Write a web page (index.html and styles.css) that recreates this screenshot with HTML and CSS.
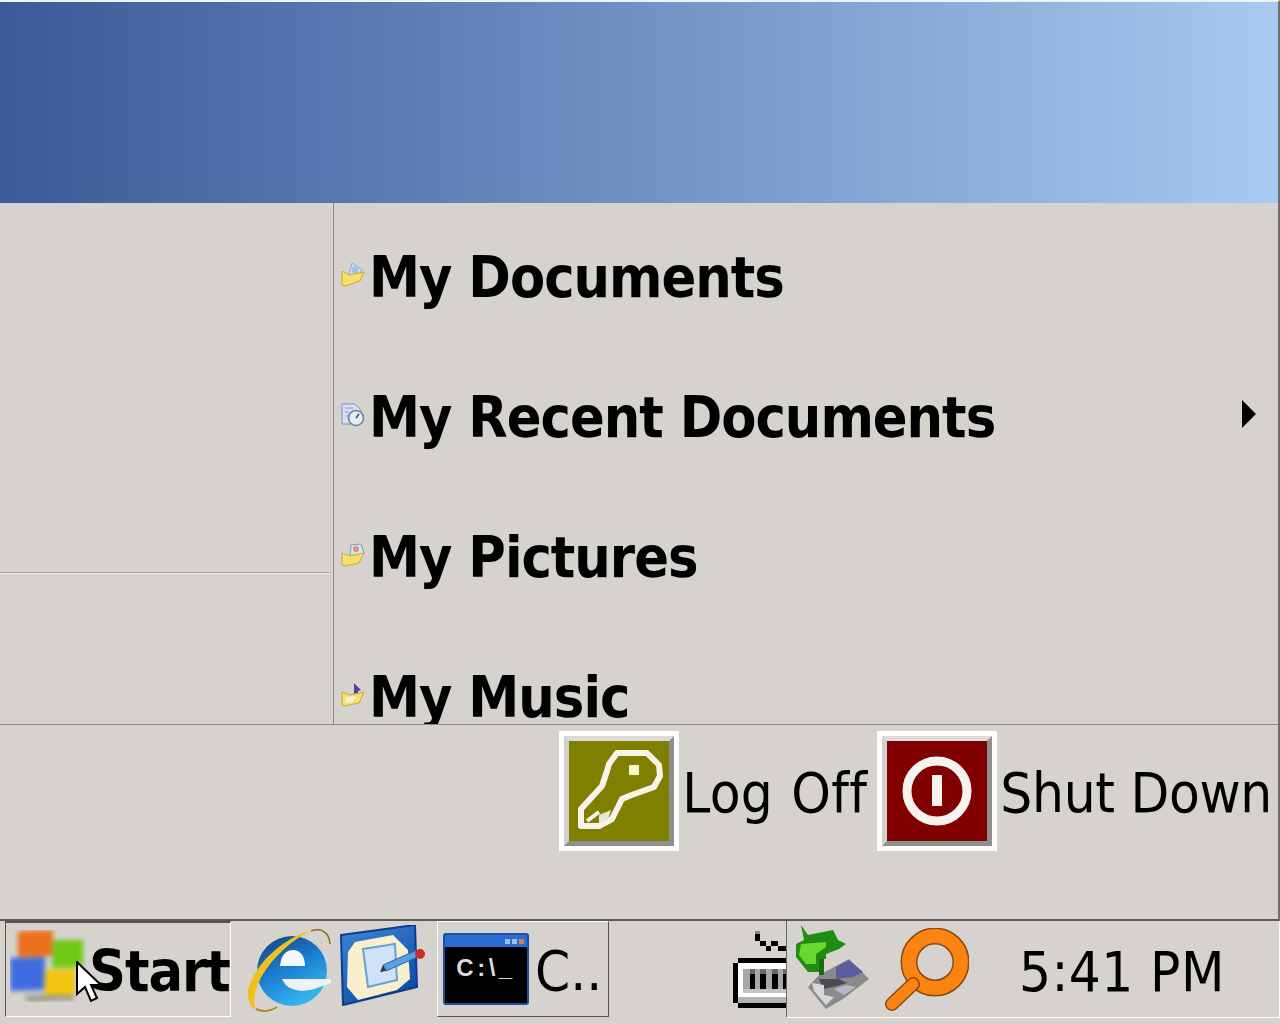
FILE: index.html
```html
<!DOCTYPE html>
<html lang="en">
<head>
<meta charset="utf-8">
<title>Start Menu</title>
<link rel="stylesheet" href="styles.css">
</head>
<body>
<div class="desktop">
  <section class="menu">
    <div class="banner"></div>
    <div class="middle">
      <aside class="pinned"><div class="pinned-rule"></div></aside>
      <nav class="places">
        <a class="place">
          <svg class="place-icon" viewBox="0 0 24 26"><path d="M11 1l10 7-5 9-8-5z" fill="#cfe3f0" stroke="#8fa6c0"/><circle cx="14" cy="8" r="3.4" fill="#9cc4e4"/><path d="M1 9l7 4 15-3-4 9-15 5-3-1z" fill="#f7df6e" stroke="#c9a827"/></svg>
          <span class="place-label">My Documents</span>
        </a>
        <a class="place">
          <svg class="place-icon" viewBox="0 0 24 26"><path d="M1 2h13l6 6v14H1z" fill="#d7e0f2" stroke="#7f8fc0"/><path d="M4 6h8M4 10h4M4 14h3" stroke="#8b9bcb"/><circle cx="15" cy="16" r="7.5" fill="#e4ebf6" stroke="#6f7f9f" stroke-width="1.6"/><path d="M15 16l3-4" stroke="#404a66" stroke-width="1.5"/></svg>
          <span class="place-label">My Recent Documents</span>
          <svg class="place-arrow" viewBox="0 0 14 28"><path d="M0 0l14 14L0 28z" fill="#000"/></svg>
        </a>
        <a class="place">
          <svg class="place-icon" viewBox="0 0 24 26"><path d="M10 3l10-1 3 9-9 6-5-5z" fill="#cfe6ea" stroke="#7d9cb5"/><circle cx="15" cy="7" r="3" fill="#e38f80"/><path d="M1 11l7 3 15-3-5 10-14 3-3-1z" fill="#f7df6e" stroke="#c9a827"/></svg>
          <span class="place-label">My Pictures</span>
        </a>
        <a class="place">
          <svg class="place-icon" viewBox="0 0 24 26"><path d="M13 1l7 7-3 1v5h-4z" fill="#4a47a3"/><path d="M1 10l8 3 14-3-5 11-14 3-3-1z" fill="#f7df6e" stroke="#c9a827"/><path d="M5 15l10-1-3 6-8 1z" fill="#f5eedc"/></svg>
          <span class="place-label">My Music</span>
        </a>
      </nav>
    </div>
    <div class="session">
      <button class="session-action">
        <span class="session-tile tile-olive">
          <svg class="tile-glyph" viewBox="0 0 100 100">
            <path d="M40 23l8-11h30l12 12 1 11-6 11-25 9-7 3-10 20-13 7H12V68l21-23 5-15z" fill="none" stroke="#f6f4ea" stroke-width="6" stroke-linejoin="round"/>
            <rect x="60" y="24" width="10" height="10" fill="#fbf8c8"/>
            <path d="M18 80l12-9" stroke="#f6f4ea" stroke-width="4"/>
            <path d="M30 74l12-5-3 10-9 3z" fill="#e8e6d4"/>
          </svg>
        </span>
        <span class="session-label session-label-wide">Log Off</span>
      </button>
      <button class="session-action">
        <span class="session-tile tile-maroon">
          <svg class="tile-glyph" viewBox="0 0 100 100"><circle cx="50" cy="50" r="30" fill="none" stroke="#f6f2ee" stroke-width="9"/><rect x="45" y="34" width="10" height="31" fill="#f6f2ee"/></svg>
        </span>
        <span class="session-label session-label-tight">Shut Down</span>
      </button>
    </div>
  </section>
  <footer class="taskbar">
    <button class="start">
      <svg class="start-flag" viewBox="0 0 76 72">
        <g class="soft">
          <path d="M14 66l50-4 0 8-46 2z" fill="#9b9a90"/>
          <path d="M8 1l35-1-1 26-34 1z" fill="#ea701c"/>
          <path d="M43 10l30 0 0 27-31 1z" fill="#70c814"/>
          <path d="M0 28l35-1-1 33-34 1z" fill="#3f6be0"/>
          <path d="M35 40l30-1 0 26-30 0z" fill="#f2c50c"/>
        </g>
      </svg>
      <span class="start-label">Start</span>
    </button>
    <div class="quick">
      <svg class="quick-ie" viewBox="0 0 84 84">
        <defs>
          <linearGradient id="ieBlue" x1="0" y1="0" x2=".5" y2="1">
            <stop offset="0" stop-color="#123f7c"/>
            <stop offset=".55" stop-color="#1b7fd0"/>
            <stop offset="1" stop-color="#36b2f0"/>
          </linearGradient>
        </defs>
        <circle cx="45" cy="43" r="35" fill="url(#ieBlue)"/>
        <path d="M33 38C34 27 39 22 46 22s12 6 12 16z" fill="#f4f8fc"/>
        <path d="M35 51h49v4l-14 5c-12 5-26 3-32-4z" fill="#eef2f4"/>
        <path d="M64 3C40 8 8 34 1 62c-1 10 2 18 8 19-4-9-1-21 7-35C26 30 44 12 64 3z" fill="#efc11f"/>
        <path d="M64 3c8-3 18-1 19 13" fill="none" stroke="#8a7020" stroke-width="1.5"/>
        <path d="M9 81c7 3 15 2 21-2" fill="none" stroke="#b08a1c" stroke-width="2"/>
      </svg>
      <svg class="quick-note" viewBox="0 0 86 84">
        <defs>
          <linearGradient id="noteBlue" x1="0" y1="0" x2=".6" y2="1">
            <stop offset="0" stop-color="#3f86d8"/>
            <stop offset="1" stop-color="#0f4ca6"/>
          </linearGradient>
        </defs>
        <path d="M1 10L75 0l2 62-74 18z" fill="url(#noteBlue)" stroke="#0d3c8d" stroke-width="2" stroke-linejoin="round"/>
        <path d="M15 17l38-7 15 15 2 29-13 11-39 10-11-13 1-35z" fill="#f8f0cc"/>
        <path d="M23 24l32-5 2 36-29 7z" fill="#cfe2f6" stroke="#6aa0d8" stroke-width="2"/>
        <path d="M43 40l34-15 3 6-34 15z" fill="#5aa0e0" stroke="#2a63b5"/>
        <path d="M43 40l3 6-6 1z" fill="#3a3a3a"/>
        <circle cx="80" cy="29" r="5" fill="#c42f28"/>
      </svg>
    </div>
    <button class="task">
      <span class="console">
        <span class="console-title"><i class="console-dot"></i><i class="console-dot"></i><i class="console-dot console-dot-red"></i></span>
        <span class="console-screen">C:\_</span>
      </span>
      <span class="task-label">C..</span>
    </button>
    <div class="keyboard-slot">
      <svg class="keyboard" viewBox="0 0 53 78" shape-rendering="crispEdges">
        <path d="M22 0h5v3h-5z" fill="#8a8a8a"/>
        <path d="M22 3h5v7h6v5h5v-5h7v5h8v5h-8v-5h-7v5h-5v-5h-6v-5h-5z" fill="#000"/>
        <path d="M5 27h48v5H5zM0 32h5v40H0zM5 72h48v5H5z" fill="#000"/>
        <path d="M5 32h48v40H5z" fill="#fff"/>
        <path d="M10 38h43v20H10z" fill="#a8a8a8"/>
        <path d="M17 38h5v20h-5zM27 38h6v20h-6zM39 38h6v20h-6zM50 38h3v20h-3z" fill="#6a6a6a"/>
        <path d="M17 43h5v15h-5zM27 43h6v15h-6zM39 43h6v15h-6zM50 43h3v15h-3z" fill="#000"/>
        <path d="M10 58h43v4H10z" fill="#c4c4c4"/>
        <path d="M5 66h48v6H5z" fill="#b4b4b4"/>
      </svg>
    </div>
    <div class="tray">
      <svg class="tray-net" viewBox="0 0 74 84">
        <path d="M30 84L12 62l11-12 30-16 20 20-26 20z" fill="#8a8a8a"/>
        <path d="M40 42l13-7 14 12-10 5-17 2z" fill="#5a5c9c"/>
        <path d="M23 54h20l8 4-14 4-10 2z" fill="#4a4a50"/>
        <path d="M16 58l12 2 0 10 10 2-8 8-12-14z" fill="#d8d8dc"/>
        <path d="M38 64l12-4 10 2-12 8z" fill="#b8b8c4"/>
        <path d="M5 0l7 10 25-5 5 10 8 4-7 5-13 5v5h-2l-1 13H12L0 32V19l8-4z" fill="#1f8e10"/>
        <path d="M5 19l25-2v5L20 29v10H10l-7-9z" fill="#66d830"/>
        <path d="M23 34h5v16h-5z" fill="#1a6a10"/>
      </svg>
      <svg class="tray-search" viewBox="0 0 84 84">
        <ellipse cx="50" cy="34" rx="26" ry="26" fill="none" stroke="#8a4a10" stroke-width="17"/>
        <ellipse cx="50" cy="34" rx="26" ry="26" fill="none" stroke="#fb8312" stroke-width="14"/>
        <path d="M28 56L7 76" stroke="#8a4a10" stroke-width="14" stroke-linecap="round"/>
        <path d="M28 56L7 76" stroke="#fb8312" stroke-width="11" stroke-linecap="round"/>
      </svg>
      <span class="clock">5:41 PM</span>
    </div>
    <svg class="pointer" viewBox="0 0 24 42"><path d="M1 1v32l8-7 6 14 6-3-6-13h10z" fill="#fff" stroke="#000" stroke-width="2"/></svg>
  </footer>
</div>
</body>
</html>
```

FILE: styles.css
```css
* { box-sizing: border-box; }
html, body { margin: 0; height: 100%; overflow: hidden; }
body {
  background: #d6d3ce;
  font-family: "DejaVu Sans", sans-serif;
  font-stretch: condensed;
  color: #000;
}
button {
  font: inherit;
  color: inherit;
  background: none;
  border: 0;
  padding: 0;
  margin: 0;
}
.desktop {
  width: 1280px;
  height: 1024px;
  display: flex;
  flex-direction: column;
  position: relative;
}
.menu {
  height: 921px;
  display: flex;
  flex-direction: column;
  border-top: 2px solid #f2f1ee;
  border-right: 2px solid #6e6e6a;
  border-bottom: 2px solid #5a5a58;
}
.banner {
  height: 201px;
  flex: none;
  background: linear-gradient(90deg, #3a5a98, #a6caf0);
}
.middle {
  height: 522px;
  flex: none;
  display: flex;
  border-bottom: 1px solid #8a8a86;
}
.pinned {
  width: 334px;
  flex: none;
  border-right: 1px solid #8a8a86;
  padding-top: 369px;
}
.pinned-rule {
  width: 331px;
  height: 2px;
  border-top: 1px solid #a0a09c;
  border-bottom: 1px solid #eeede8;
}
.places {
  flex: 1;
  min-width: 0;
  overflow: hidden;
  padding: 4px 0 0 7px;
}
.place {
  height: 140px;
  display: flex;
  align-items: center;
}
.place-icon {
  width: 24px;
  height: 26px;
  flex: none;
  margin-right: 4px;
  margin-top: -4px;
  filter: blur(.6px);
}
.place-label {
  font-size: 57px;
  font-weight: 700;
  letter-spacing: -1px;
  line-height: 1;
  white-space: nowrap;
}
.place-arrow {
  width: 14px;
  height: 28px;
  flex: none;
  margin-left: auto;
  margin-right: 22px;
  margin-top: -6px;
}
.session {
  flex: 1;
  display: flex;
  justify-content: flex-end;
  align-items: flex-start;
  gap: 10px;
  padding: 6px 6px 0 0;
}
.session-action {
  display: flex;
  align-items: center;
  gap: 3px;
}
.session-tile {
  width: 120px;
  height: 120px;
  flex: none;
  display: flex;
  align-items: center;
  justify-content: center;
  background: #fff;
}
.tile-glyph {
  display: block;
  width: 110px;
  height: 110px;
  border: 5px solid;
  border-color: #dcdada #8f8f8f #8f8f8f #d2cfcf;
  filter: blur(.5px);
}
.tile-olive .tile-glyph { background: #808000; }
.tile-maroon .tile-glyph { background: #800000; }
.session-label {
  font-size: 56px;
  line-height: 1;
  margin-top: 4px;
  white-space: nowrap;
}
.session-label-wide { letter-spacing: .3px; word-spacing: 2px; }
.session-label-tight { letter-spacing: -.3px; }
.taskbar {
  flex: 1;
  display: flex;
  align-items: flex-start;
  position: relative;
  min-height: 0;
}
.start {
  width: 226px;
  height: 96px;
  margin-left: 5px;
  flex: none;
  display: flex;
  align-items: center;
  border-top: 2px solid #55554f;
  border-left: 1px solid #55554f;
  border-right: 1px solid #fff;
  border-bottom: 1px solid #fff;
}
.start-flag {
  width: 76px;
  height: 72px;
  flex: none;
  margin-left: 4px;
  margin-right: 3px;
  margin-top: -8px;
}
.soft { filter: blur(2.4px); }
.start-label {
  font-size: 57px;
  font-weight: 700;
  letter-spacing: -1px;
  line-height: 1;
  margin-top: 3px;
  white-space: nowrap;
}
.quick {
  width: 206px;
  flex: none;
  height: 96px;
  display: flex;
  align-items: flex-start;
  padding-left: 16px;
  gap: 9px;
}
.quick-ie { width: 84px; height: 84px; margin-top: 7px; flex: none; overflow: visible; filter: blur(.5px); }
.quick-note { width: 86px; height: 84px; margin-top: 4px; flex: none; filter: blur(.5px); }
.task {
  width: 172px;
  height: 96px;
  flex: none;
  display: flex;
  align-items: center;
  border-left: 1px solid #fff;
  border-top: 1px solid #fff;
  border-right: 1px solid #55554f;
  border-bottom: 1px solid #55554f;
  padding-left: 5px;
}
.console {
  width: 86px;
  height: 72px;
  flex: none;
  display: flex;
  flex-direction: column;
  border: 2px solid #1c4fa0;
  border-radius: 3px;
}
.console-title {
  height: 12px;
  background: #2a6dd0;
  flex: none;
  display: flex;
  justify-content: flex-end;
  align-items: center;
  gap: 2px;
  padding-right: 3px;
}
.console-dot {
  width: 5px;
  height: 5px;
  background: #9cc0ee;
}
.console-dot-red { background: #d07a6a; }
.console-screen {
  flex: 1;
  background: #000;
  color: #dcdcdc;
  font: 700 24px/42px "Liberation Sans", sans-serif;
  letter-spacing: 3.5px;
  text-align: center;
}
.task-label {
  font-size: 56px;
  line-height: 1;
  margin-left: 6px;
  margin-top: 3px;
  white-space: nowrap;
}
.keyboard-slot {
  width: 177px;
  height: 96px;
  flex: none;
  padding: 10px 0 0 124px;
  overflow: hidden;
}
.keyboard { display: block; width: 53px; height: 78px; }
.tray {
  flex: 1;
  height: 97px;
  display: flex;
  align-items: flex-start;
  border-left: 1px solid #6a6a66;
  border-right: 1px solid #fff;
  border-bottom: 1px solid #fff;
  padding-left: 9px;
}
.tray-net { width: 74px; height: 84px; flex: none; margin-top: 4px; filter: blur(.6px); }
.tray-search { width: 84px; height: 84px; flex: none; margin-top: 7px; margin-left: 15px; }
.clock {
  font-size: 56px;
  letter-spacing: .4px;
  line-height: 1;
  white-space: nowrap;
  margin-left: 50px;
  margin-top: 23px;
}
.pointer {
  position: absolute;
  left: 76px;
  top: 40px;
  width: 24px;
  height: 42px;
}
```
